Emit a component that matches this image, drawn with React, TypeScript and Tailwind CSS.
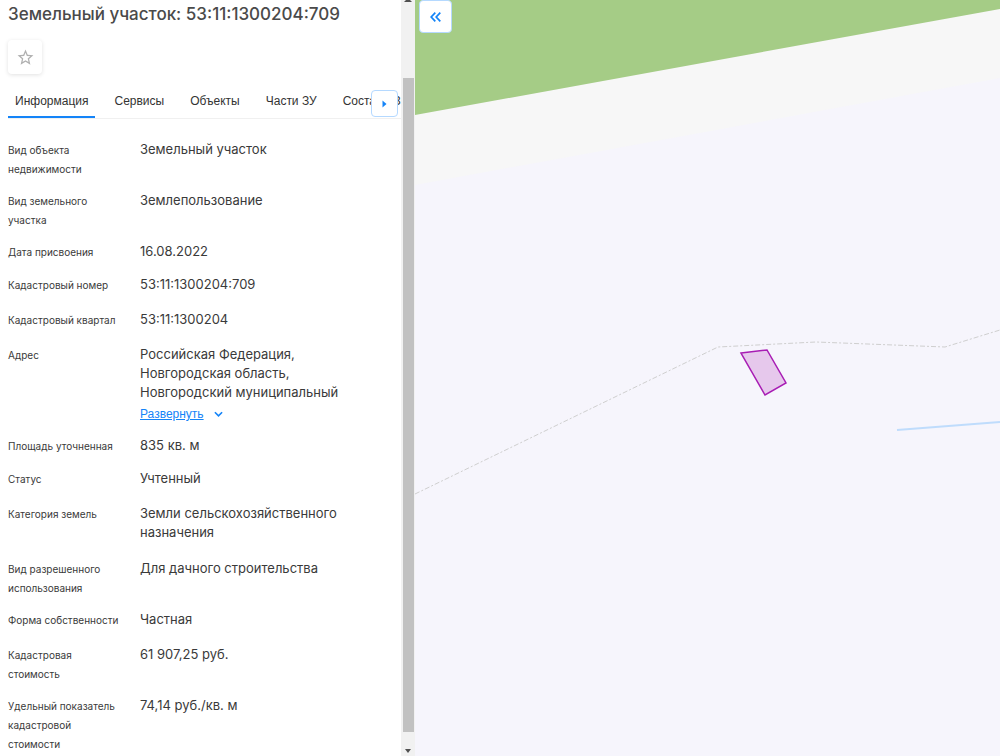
import { useState } from "react";
import clsx from "clsx";

interface Field {
  label: string;
  value: string;
  spacing: string;
  expandable?: boolean;
}

const TIGHT = "mb-3";
const NORMAL = "mb-[14px]";
const LOOSE = "mb-[17px]";

const fields: Field[] = [
  { label: "Вид объекта недвижимости", value: "Земельный участок", spacing: TIGHT },
  { label: "Вид земельного участка", value: "Землепользование", spacing: TIGHT },
  { label: "Дата присвоения", value: "16.08.2022", spacing: TIGHT },
  { label: "Кадастровый номер", value: "53:11:1300204:709", spacing: NORMAL },
  { label: "Кадастровый квартал", value: "53:11:1300204", spacing: NORMAL },
  {
    label: "Адрес",
    value: "Российская Федерация, Новгородская область, Новгородский муниципальный",
    spacing: TIGHT,
    expandable: true,
  },
  { label: "Площадь уточненная", value: "835 кв. м", spacing: TIGHT },
  { label: "Статус", value: "Учтенный", spacing: NORMAL },
  { label: "Категория земель", value: "Земли сельскохозяйственного назначения", spacing: LOOSE },
  { label: "Вид разрешенного использования", value: "Для дачного строительства", spacing: TIGHT },
  { label: "Форма собственности", value: "Частная", spacing: NORMAL },
  { label: "Кадастровая стоимость", value: "61 907,25 руб.", spacing: TIGHT },
  { label: "Удельный показатель кадастровой стоимости", value: "74,14 руб./кв. м", spacing: "mb-0" },
];

const tabs = ["Информация", "Сервисы", "Объекты", "Части ЗУ", "Состав ЕЗП"];

function Tabs() {
  const [active, setActive] = useState(tabs[0]);

  return (
    <div className="relative mt-2 pl-2">
      <div role="tablist" className="flex gap-3 overflow-hidden border-b border-[#f0f0f0]">
        {tabs.map((tab) => (
          <button
            key={tab}
            type="button"
            role="tab"
            aria-selected={tab === active}
            onClick={() => setActive(tab)}
            className={clsx(
              "h-9 shrink-0 border-b-2 px-[7px] pt-1 font-['Liberation_Sans',sans-serif] text-xs whitespace-nowrap text-[#333]",
              tab === active ? "border-[#1484f8]" : "border-transparent"
            )}
          >
            {tab}
          </button>
        ))}
      </div>
      <button
        type="button"
        aria-label="Следующие вкладки"
        className="absolute right-[3px] bottom-[2px] flex h-[27px] w-[27px] items-center justify-center rounded-sm border border-[#b5d9ff] bg-white"
      >
        <svg width="5" height="8" viewBox="0 0 5 8" fill="#1484f8">
          <path d="M0.5 0.5 4.5 4 0.5 7.5Z" />
        </svg>
      </button>
    </div>
  );
}

function FieldRow({ field }: { field: Field }) {
  return (
    <div className={clsx("flex min-h-[21px] items-baseline", field.spacing)}>
      <dt className="w-[132px] shrink-0 pr-4 text-[10px] leading-[19px] text-[#3a3a3a]">{field.label}</dt>
      <dd className="max-w-[216px] text-[13px] leading-[19px] text-[#3a3a3a]">
        {field.value}
        {field.expandable && (
          <a
            href="#address"
            className="flex h-[22px] items-center gap-[10px] pt-[2px] font-['Liberation_Sans',sans-serif] text-xs text-[#1484f8]"
          >
            <span className="underline">Развернуть</span>
            <svg width="9" height="6" viewBox="0 0 10 6" fill="none" stroke="currentColor" strokeWidth="1.8">
              <path d="M1 1 5 5 9 1" />
            </svg>
          </a>
        )}
      </dd>
    </div>
  );
}

function Scrollbar() {
  return (
    <div aria-hidden="true" className="flex w-[14px] shrink-0 flex-col items-center bg-[#f1f1f1]">
      <svg width="8" height="2" viewBox="0 0 8 2" fill="#505050">
        <path d="M2 0H6L8 2H0Z" />
      </svg>
      <div className="mt-[76px] w-[11px] flex-1 bg-[#c1c1c1]" />
      <svg className="mt-[17px] mb-[3px]" width="8" height="4" viewBox="0 0 8 4" fill="#505050">
        <path d="M1 0H7L4 4Z" />
      </svg>
    </div>
  );
}

function ParcelMap() {
  return (
    <main className="relative min-w-0 flex-1 bg-[#f6f5fc]">
      <svg
        className="absolute inset-0 h-full w-full"
        viewBox="0 0 585 756"
        preserveAspectRatio="xMinYMin slice"
        fill="none"
        role="img"
        aria-label="Карта участка"
      >
        <path d="M0 0H585V78L0 185Z" fill="#f7f7f7" />
        <path d="M0 0H585V9L0 115Z" fill="#a5cc86" />
        <path d="M0 494 303 347 401 342 530 347 585 330" stroke="#cfcfcf" strokeDasharray="5 2 2 2" />
        <path d="M482 430 585 422" stroke="#bfdcfc" strokeWidth="2" />
        <path d="M326 353 352 350 371 383 350 395Z" fill="#e6c8ec" stroke="#a81db4" strokeWidth="1.5" />
      </svg>
      <button
        type="button"
        aria-label="Свернуть панель"
        className="absolute top-0 left-1 flex h-[33px] w-[33px] items-center justify-center rounded-sm border border-[#b5d9ff] bg-white"
      >
        <svg width="11" height="10" viewBox="0 0 11 10" fill="none" stroke="#1484f8" strokeWidth="1.7">
          <path d="M5.3 0.7 1.2 5 5.3 9.3M10.3 0.7 6.2 5 10.3 9.3" />
        </svg>
      </button>
    </main>
  );
}

export default function App() {
  return (
    <div className="flex min-h-screen bg-white font-['Inter','Noto_Sans',sans-serif]">
      <section className="w-[401px] shrink-0 pt-1">
        <h1 className="pl-2 text-[17px] leading-5 font-medium text-[#4a4a4a]">
          Земельный участок: 53:11:1300204:709
        </h1>
        <button
          type="button"
          aria-label="Добавить в избранное"
          className="mt-4 ml-2 flex h-[34px] w-[34px] items-center justify-center rounded-sm bg-white shadow-[0_1px_4px_rgba(0,0,0,0.12)]"
        >
          <svg width="19" height="19" viewBox="0 0 24 24" fill="#b0b0b0">
            <path d="M22 9.24l-7.19-.62L12 2 9.19 8.63 2 9.24l5.46 4.73L5.82 21 12 17.27 18.18 21l-1.63-7.03L22 9.24zM12 15.4l-3.76 2.27 1-4.28-3.32-2.88 4.38-.38L12 6.1l1.71 4.04 4.38.38-3.32 2.88 1 4.28L12 15.4z" />
          </svg>
        </button>
        <Tabs />
        <dl className="mt-[21px] pl-2">
          {fields.map((field) => (
            <FieldRow key={field.label} field={field} />
          ))}
        </dl>
      </section>
      <Scrollbar />
      <ParcelMap />
    </div>
  );
}
